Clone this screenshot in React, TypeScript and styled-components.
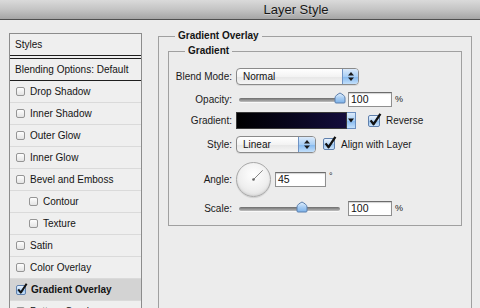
import React from 'react';
import styled, { createGlobalStyle } from 'styled-components';

const GlobalStyle = createGlobalStyle`
  *, *::before, *::after { box-sizing: border-box; }
  html, body { margin: 0; padding: 0; background: #ececec; }
  body {
    font-family: "Liberation Sans", Arial, sans-serif;
    font-size: 10px;
    color: #1c1c1c;
    overflow: hidden;
  }
  #root { width: 480px; height: 308px; overflow: hidden; }
`;

const Window = styled.div`
  width: 480px;
  height: 308px;
  display: flex;
  flex-direction: column;
  background: #ececec;
  overflow: hidden;
`;

const TitleBar = styled.div`
  flex: 0 0 20px;
  height: 20px;
  border-bottom: 1px solid #4f4f4f;
  background: linear-gradient(#dadada, #c4c4c4 50%, #a5a5a5);
  display: flex;
  align-items: center;
  justify-content: center;
  padding-left: 112px;
  font-size: 13px;
  color: #161616;
  text-shadow: 0 1px 0 rgba(255, 255, 255, 0.35);
`;

const Body = styled.div`
  flex: 1;
  min-height: 0;
  display: flex;
  align-items: flex-start;
  padding: 10px 0 0 9px;
  gap: 16px;
`;

/* ---------- left styles list ---------- */

const StylesPanel = styled.div`
  flex: 0 0 133px;
  width: 133px;
  height: 300px;
  margin-top: 3px;
  border: 1px solid #8c8c8c;
  background: #efefef;
  display: flex;
  flex-direction: column;
`;

const HeaderRow = styled.div<{ $h: number }>`
  height: ${(p) => p.$h}px;
  flex: 0 0 ${(p) => p.$h}px;
  display: flex;
  align-items: center;
  padding-left: 5px;
  color: #141414;
`;

const DoubleRule = styled.div`
  flex: 0 0 4px;
  border-top: 1px solid #1e1e1e;
  border-bottom: 1px solid #1e1e1e;
`;

const SingleRule = styled.div`
  flex: 0 0 1px;
  background: #1e1e1e;
`;

const ListRow = styled.div<{ $indent: boolean; $active: boolean }>`
  flex: 0 0 22px;
  height: 22px;
  display: flex;
  align-items: center;
  gap: 5px;
  padding-left: ${(p) => (p.$indent ? 19 : 6)}px;
  border-bottom: 1px solid #dadada;
  background: ${(p) => (p.$active ? '#d3d3d3' : 'transparent')};
  font-weight: ${(p) => (p.$active ? 'bold' : 'normal')};
  color: #141414;
`;

const SmallBox = styled.span`
  width: 9px;
  height: 9px;
  flex: 0 0 9px;
  border: 1px solid #959595;
  border-radius: 2px;
  background: linear-gradient(#fdfdfd, #e4e4e4);
`;

/* ---------- aqua checkbox ---------- */

const AquaBoxWrap = styled.span<{ $size: number }>`
  position: relative;
  width: ${(p) => p.$size}px;
  height: ${(p) => p.$size}px;
  flex: 0 0 ${(p) => p.$size}px;
  border: 1px solid #5f80ad;
  border-radius: 2px;
  background: linear-gradient(#eaf3fd, #b9d7f6 50%, #93c0ee 51%, #cbe3fa);
`;

const CheckMark = styled.svg`
  position: absolute;
  left: -1px;
  top: -3px;
  overflow: visible;
`;

const AquaCheck = ({ size }: { size: number }) => (
  <AquaBoxWrap $size={size}>
    <CheckMark width={size + 2} height={size + 2} viewBox="0 0 14 14">
      <path d="M2.6 7.4 L5.6 11.2 L12.4 0.8" fill="none" stroke="#111" strokeWidth="2.3" strokeLinejoin="round" />
    </CheckMark>
  </AquaBoxWrap>
);

/* ---------- right fieldsets ---------- */

const OuterSet = styled.fieldset`
  flex: 0 0 314px;
  width: 314px;
  height: 300px;
  margin: 0;
  padding: 3px 9px 0 9px;
  border: 1px solid #a0a0a0;
  min-width: 0;
`;

const InnerSet = styled.fieldset`
  margin: 0;
  padding: 0 0 9px 0;
  border: 1px solid #a0a0a0;
  min-width: 0;
`;

const Legend = styled.legend<{ $ml: number }>`
  margin-left: ${(p) => p.$ml}px;
  padding: 0 3px;
  font-weight: bold;
  font-size: 10px;
  line-height: 12px;
  color: #141414;
`;

const FormRow = styled.div<{ $h: number; $mt: number }>`
  display: flex;
  align-items: center;
  height: ${(p) => p.$h}px;
  margin-top: ${(p) => p.$mt}px;
`;

const Label = styled.span`
  width: 63px;
  flex: 0 0 63px;
  margin-right: 4px;
  text-align: right;
  color: #1a1a1a;
`;

const Select = styled.div<{ $w: number }>`
  width: ${(p) => p.$w}px;
  height: 17px;
  display: flex;
  border: 1px solid #8a8a8a;
  border-radius: 4px;
  background: linear-gradient(#ffffff, #f3f3f3 50%, #e6e6e6 51%, #f5f5f5);
  box-shadow: 0 1px 0 rgba(0, 0, 0, 0.08);
  overflow: hidden;
`;

const SelectText = styled.span`
  flex: 1;
  padding-left: 6px;
  line-height: 15px;
  color: #111;
`;

const AquaButton = styled.span<{ $w: number }>`
  width: ${(p) => p.$w}px;
  flex: 0 0 ${(p) => p.$w}px;
  display: flex;
  align-items: center;
  justify-content: center;
  border-left: 1px solid #6f93c4;
  background: linear-gradient(#dbeafb, #a9cff5 50%, #83b8ef 51%, #c3e0fb);
`;

const StepArrows = () => (
  <svg width="8" height="13" viewBox="0 0 8 13">
    <path d="M1 5.5 L4 2 L7 5.5 Z" fill="#1a1a1a" />
    <path d="M1 7.5 L4 11 L7 7.5 Z" fill="#1a1a1a" />
  </svg>
);

const SliderBox = styled.div`
  position: relative;
  width: 101px;
  height: 15px;
  margin-left: 3px;
  flex: 0 0 101px;
  display: flex;
  align-items: center;
`;

const Track = styled.div`
  width: 100%;
  height: 4px;
  border-radius: 2px;
  background: linear-gradient(#6d6d6d, #9a9a9a 60%, #c2c2c2);
  box-shadow: 0 1px 0 rgba(255, 255, 255, 0.7);
`;

const ThumbSvg = styled.svg`
  position: absolute;
  top: 0;
`;

const Slider = ({ pos }: { pos: number }) => (
  <SliderBox>
    <Track />
    <ThumbSvg width="12" height="12" viewBox="0 0 12 12" style={{ left: `calc(${pos * 100}% - 6px)` }}>
      <defs>
        <linearGradient id="thumbg" x1="0" y1="0" x2="0" y2="1">
          <stop offset="0" stopColor="#e4f0fc" />
          <stop offset="0.5" stopColor="#a8cdf3" />
          <stop offset="1" stopColor="#7cb2ea" />
        </linearGradient>
      </defs>
      <path d="M6 1 C8.5 2.3 11 3.8 11 6 V10 Q11 11 10 11 H2 Q1 11 1 10 V6 C1 3.8 3.5 2.3 6 1 Z" fill="url(#thumbg)" stroke="#5a7eac" strokeWidth="1" />
    </ThumbSvg>
  </SliderBox>
);

const Field = styled.div<{ $w: number; $ml: number }>`
  width: ${(p) => p.$w}px;
  height: 15px;
  margin-left: ${(p) => p.$ml}px;
  border: 1px solid #8f8f8f;
  border-top-color: #6c6c6c;
  background: #fff;
  box-shadow: inset 0 1px 1px rgba(0, 0, 0, 0.18);
  padding-left: 2px;
  line-height: 13px;
  font-size: 10.5px;
  color: #111;
`;

const Unit = styled.span<{ $mt: number }>`
  align-self: flex-start;
  margin-left: 3px;
  margin-top: ${(p) => p.$mt}px;
  line-height: 10px;
  font-size: 9px;
  color: #222;
`;

const GradientBar = styled.div`
  width: 111px;
  height: 17px;
  border: 1px solid #3a3a3a;
  background: linear-gradient(to right, #000000 0%, #07051a 45%, #140d3c 100%);
`;

const DropButton = styled.div`
  width: 9px;
  height: 17px;
  display: flex;
  align-items: center;
  justify-content: center;
  border: 1px solid #6b8fbf;
  border-left: none;
  background: linear-gradient(#dbeafb, #a9cff5 50%, #83b8ef 51%, #c3e0fb);
`;

const CheckLabel = styled.div<{ $ml: number }>`
  display: flex;
  align-items: center;
  gap: 6px;
  margin-left: ${(p) => p.$ml}px;
  color: #1a1a1a;
`;

const Dial = styled.div`
  width: 35px;
  height: 35px;
  flex: 0 0 35px;
  border-radius: 50%;
  border: 1px solid #a8a8a8;
  background: radial-gradient(circle at 50% 35%, #ffffff, #efefef 55%, #d8d8d8);
  box-shadow: 0 1px 1px rgba(0, 0, 0, 0.12), inset 0 -1px 2px rgba(0, 0, 0, 0.08);
`;

const listItems = [
  { name: 'Drop Shadow' },
  { name: 'Inner Shadow' },
  { name: 'Outer Glow' },
  { name: 'Inner Glow' },
  { name: 'Bevel and Emboss' },
  { name: 'Contour', indent: true },
  { name: 'Texture', indent: true },
  { name: 'Satin' },
  { name: 'Color Overlay' },
  { name: 'Gradient Overlay', active: true },
  { name: 'Pattern Overlay' },
  { name: 'Stroke' },
];

export default function App() {
  const angle = 45;
  const rad = (angle * Math.PI) / 180;
  const cx = 16.5;
  const cy = 16.5;
  const len = 13;
  return (
    <>
      <GlobalStyle />
      <Window>
        <TitleBar>Layer Style</TitleBar>
        <Body>
          <StylesPanel>
            <HeaderRow $h={21}>Styles</HeaderRow>
            <DoubleRule />
            <HeaderRow $h={21}>Blending Options: Default</HeaderRow>
            <SingleRule />
            {listItems.map((it) => (
              <ListRow key={it.name} $indent={!!it.indent} $active={!!it.active}>
                {it.active ? <AquaCheck size={10} /> : <SmallBox />}
                <span>{it.name}</span>
              </ListRow>
            ))}
          </StylesPanel>

          <OuterSet>
            <Legend $ml={7}>Gradient Overlay</Legend>
            <InnerSet>
              <Legend $ml={16}>Gradient</Legend>

              <FormRow $h={18} $mt={10}>
                <Label>Blend Mode:</Label>
                <Select $w={123}>
                  <SelectText>Normal</SelectText>
                  <AquaButton $w={16}>
                    <StepArrows />
                  </AquaButton>
                </Select>
              </FormRow>

              <FormRow $h={15} $mt={7}>
                <Label>Opacity:</Label>
                <Slider pos={1} />
                <Field $w={44} $ml={8}>100</Field>
                <Unit $mt={2}>%</Unit>
              </FormRow>

              <FormRow $h={17} $mt={5}>
                <Label>Gradient:</Label>
                <GradientBar />
                <DropButton>
                  <svg width="6" height="5" viewBox="0 0 6 5">
                    <path d="M0 0.5 H6 L3 4.5 Z" fill="#111" />
                  </svg>
                </DropButton>
                <CheckLabel $ml={12}>
                  <AquaCheck size={12} />
                  <span>Reverse</span>
                </CheckLabel>
              </FormRow>

              <FormRow $h={18} $mt={6}>
                <Label>Style:</Label>
                <Select $w={80}>
                  <SelectText>Linear</SelectText>
                  <AquaButton $w={17}>
                    <StepArrows />
                  </AquaButton>
                </Select>
                <CheckLabel $ml={7}>
                  <AquaCheck size={12} />
                  <span>Align with Layer</span>
                </CheckLabel>
              </FormRow>

              <FormRow $h={36} $mt={8}>
                <Label>Angle:</Label>
                <Dial>
                  <svg width="33" height="33" viewBox="0 0 33 33">
                    <line
                      x1={cx}
                      y1={cy}
                      x2={cx + len * Math.cos(rad)}
                      y2={cy - len * Math.sin(rad)}
                      stroke="#7a7a7a"
                      strokeWidth="0.9"
                    />
                    <circle cx={cx} cy={cy} r="1.3" fill="#666" />
                  </svg>
                </Dial>
                <Field $w={51} $ml={4}>{angle}</Field>
                <Unit $mt={10}>°</Unit>
              </FormRow>

              <FormRow $h={15} $mt={4}>
                <Label>Scale:</Label>
                <Slider pos={0.62} />
                <Field $w={44} $ml={8}>100</Field>
                <Unit $mt={2}>%</Unit>
              </FormRow>
            </InnerSet>
          </OuterSet>
        </Body>
      </Window>
    </>
  );
}
